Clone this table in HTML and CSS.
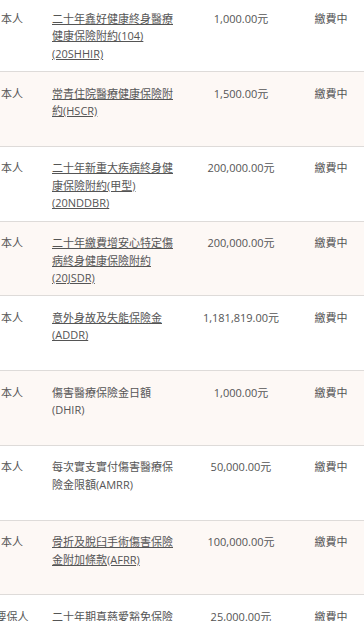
FILE: index.html
```html
<!DOCTYPE html>
<html lang="zh-Hant">
<head>
<meta charset="utf-8">
<title>保單明細</title>
<link rel="stylesheet" href="styles.css">
</head>
<body>
<div class="scroller">
  <div class="table">
    <div class="row">
      <div class="cell who">本人</div>
      <div class="cell name"><a href="#">二十年鑫好健康終身醫療健康保險附約(104)<wbr>(20SHHIR)</a></div>
      <div class="cell amount">1,000.00元</div>
      <div class="cell status">繳費中</div>
    </div>
    <div class="row alt">
      <div class="cell who">本人</div>
      <div class="cell name"><a href="#">常青住院醫療健康保險附約(HSCR)</a></div>
      <div class="cell amount">1,500.00元</div>
      <div class="cell status">繳費中</div>
    </div>
    <div class="row">
      <div class="cell who">本人</div>
      <div class="cell name"><a href="#">二十年新重大疾病終身健康保險附約(甲型)<wbr>(20NDDBR)</a></div>
      <div class="cell amount">200,000.00元</div>
      <div class="cell status">繳費中</div>
    </div>
    <div class="row alt">
      <div class="cell who">本人</div>
      <div class="cell name"><a href="#">二十年繳費增安心特定傷病終身健康保險附約(20JSDR)</a></div>
      <div class="cell amount">200,000.00元</div>
      <div class="cell status">繳費中</div>
    </div>
    <div class="row">
      <div class="cell who">本人</div>
      <div class="cell name"><a href="#">意外身故及失能保險金(ADDR)</a></div>
      <div class="cell amount">1,181,819.00元</div>
      <div class="cell status">繳費中</div>
    </div>
    <div class="row alt">
      <div class="cell who">本人</div>
      <div class="cell name">傷害醫療保險金日額(DHIR)</div>
      <div class="cell amount">1,000.00元</div>
      <div class="cell status">繳費中</div>
    </div>
    <div class="row">
      <div class="cell who">本人</div>
      <div class="cell name">每次實支實付傷害醫療保險金限額(AMRR)</div>
      <div class="cell amount">50,000.00元</div>
      <div class="cell status">繳費中</div>
    </div>
    <div class="row alt">
      <div class="cell who">本人</div>
      <div class="cell name"><a href="#">骨折及脫臼手術傷害保險金附加條款(AFRR)</a></div>
      <div class="cell amount">100,000.00元</div>
      <div class="cell status">繳費中</div>
    </div>
    <div class="row">
      <div class="cell who">要保人</div>
      <div class="cell name">二十年期真慈愛豁免保險費附約(20WPR)</div>
      <div class="cell amount">25,000.00元</div>
      <div class="cell status">繳費中</div>
    </div>
  </div>
</div>
</body>
</html>
```

FILE: styles.css
```css
html, body {
  margin: 0;
  padding: 0;
  background: #ffffff;
}

body {
  font-family: "Open Sans", "Noto Sans CJK TC", sans-serif;
  font-size: 11px;
  line-height: 17.6px;
  color: #555555;
}

.scroller {
  width: 364px;
  height: 621px;
  overflow: hidden;
}

.table {
  margin-top: -2.75px;
  margin-left: -18px;
  width: 385px;
}

.row {
  display: grid;
  grid-template-columns: 60px 145px 108px 72px;
  height: 74.75px;
  box-sizing: border-box;
  border-bottom: 1px solid #dedbd9;
  background: #ffffff;
}

.row.alt {
  background: #fdf8f5;
}

.cell {
  padding: 12.5px 10px 0;
  min-width: 0;
}

.who {
  text-align: center;
  white-space: nowrap;
  display: flex;
  justify-content: center;
}

.name a {
  color: #555555;
  text-decoration: underline;
}

.amount {
  text-align: center;
  white-space: nowrap;
  padding-left: 0;
  padding-right: 0;
}

.status {
  text-align: center;
  white-space: nowrap;
  padding-left: 0;
  padding-right: 0;
}
```
